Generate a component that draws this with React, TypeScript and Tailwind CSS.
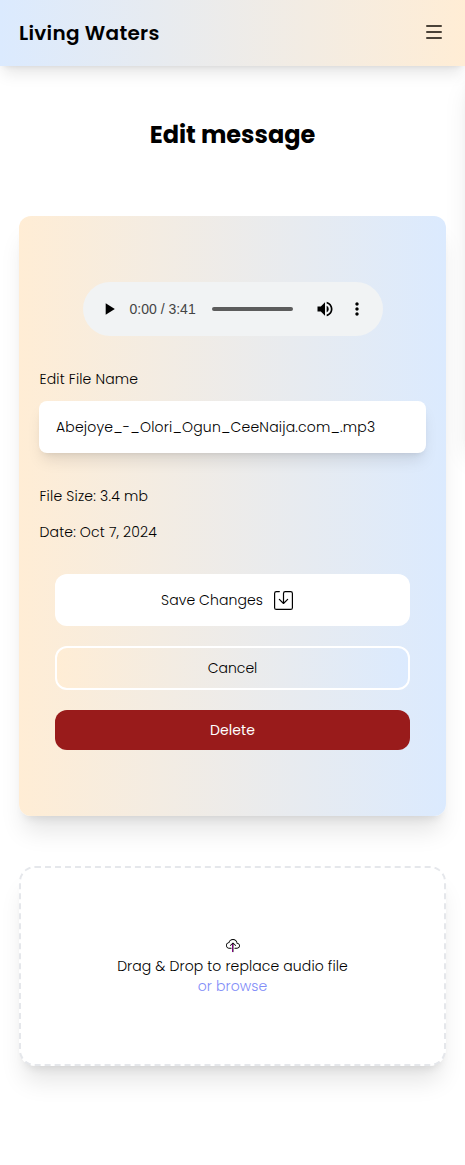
import { BsCloudUpload, BsSave } from "react-icons/bs";
import { MdMoreVert, MdPlayArrow, MdVolumeUp } from "react-icons/md";

function Header() {
  return (
    <header className="relative z-10 flex h-[66px] items-center justify-between bg-[linear-gradient(to_right,#dbeafe,#ffedd5)] pr-[23px] pl-[19px] shadow-[0_10px_15px_-3px_rgb(0_0_0/0.1),0_4px_6px_-4px_rgb(0_0_0/0.1)]">
      <h1 className="whitespace-nowrap text-[20px] leading-7 font-semibold tracking-[0.28px]">Living Waters</h1>
      <button aria-label="Menu" className="flex w-4 flex-col gap-1 pb-0.5">
        <span className="h-0.5 rounded-full bg-[#4a4238]" />
        <span className="h-0.5 rounded-full bg-[#4a4238]" />
        <span className="h-0.5 rounded-full bg-[#4a4238]" />
      </button>
    </header>
  );
}

function AudioPlayer() {
  return (
    <div className="mx-auto flex h-[54px] w-[300px] items-center rounded-full bg-[#f1f3f4]">
      <MdPlayArrow className="ml-4 size-5 shrink-0 text-black" />
      <span className="ml-[11px] w-[66px] whitespace-nowrap font-['Liberation_Sans',sans-serif] text-[14px] text-[#444]">
        0:00 / 3:41
      </span>
      <div className="ml-4 h-1 w-[81px] rounded-full bg-[#5c5c5c]" />
      <MdVolumeUp className="ml-[22px] size-5 shrink-0 text-black" />
      <MdMoreVert className="ml-3 size-5 shrink-0 text-black" />
    </div>
  );
}

function EditCard() {
  return (
    <section className="mx-[19px] mt-[65px] flex h-[600px] flex-col rounded-xl bg-[linear-gradient(to_right,#ffedd5,#dbeafe)] px-5 pt-[66px] shadow-[0_20px_25px_-5px_rgb(0_0_0/0.1),0_8px_10px_-6px_rgb(0_0_0/0.1)]">
      <AudioPlayer />
      <label className="mt-[33px] whitespace-nowrap pl-[0.5px] tracking-[0.16px]">Edit File Name</label>
      <div className="mt-3 flex h-[52px] items-center rounded-lg bg-white pl-[17px] shadow-[0_10px_15px_-3px_rgb(0_0_0/0.1),0_4px_6px_-4px_rgb(0_0_0/0.1)]">
        <span className="whitespace-nowrap tracking-[0.19px]">Abejoye_-_Olori_Ogun_CeeNaija.com_.mp3</span>
      </div>
      <p className="mt-[33px] whitespace-nowrap pl-[0.5px] tracking-[0.2px]">File Size: 3.4 mb</p>
      <p className="mt-4 whitespace-nowrap pl-[0.5px] tracking-[0.15px]">Date: Oct 7, 2024</p>
      <div className="mt-8 flex flex-col gap-5 px-4">
        <button className="flex h-[52px] items-center justify-center gap-[11px] rounded-xl bg-white pr-[11px]">
          <span className="whitespace-nowrap tracking-[0.08px]">Save Changes</span>
          <BsSave className="size-[19px]" />
        </button>
        <button className="h-11 rounded-xl border-2 border-white bg-[linear-gradient(to_right,#ffedd5,#dbeafe)]">
          <span>Cancel</span>
        </button>
        <button className="h-10 rounded-xl bg-[#991b1b] font-normal text-white">
          <span className="tracking-[0.1px]">Delete</span>
        </button>
      </div>
    </section>
  );
}

function Dropzone() {
  return (
    <section className="mx-[19px] mt-[50px] flex h-[200px] flex-col items-center rounded-2xl border-2 border-dashed border-[#e5e7eb] bg-white pt-[71px] shadow-[0_20px_25px_-5px_rgb(0_0_0/0.1),0_8px_10px_-6px_rgb(0_0_0/0.1)]">
      <div className="relative mb-[3px] size-[14px]">
        <BsCloudUpload className="size-[14px]" />
        <span className="absolute top-[5px] left-[6.5px] h-[8px] w-px bg-[#800080]" />
      </div>
      <p className="whitespace-nowrap tracking-[0.11px]">Drag &amp; Drop to replace audio file</p>
      <p className="whitespace-nowrap tracking-[0.1px] text-[#818cf8]">or browse</p>
    </section>
  );
}

export default function App() {
  return (
    <div className="relative h-[1165px] w-full overflow-hidden bg-white font-['Poppins','Inter',sans-serif] text-[14px] leading-5 font-light text-black">
      <Header />
      <aside className="absolute top-[66px] left-full h-[376px] w-60 bg-white shadow-[0_20px_25px_-5px_rgb(0_0_0/0.1),0_8px_10px_-6px_rgb(0_0_0/0.1)]" />
      <h2 className="mt-[53px] text-center text-[24px] leading-8 font-bold">Edit message</h2>
      <EditCard />
      <Dropzone />
    </div>
  );
}
